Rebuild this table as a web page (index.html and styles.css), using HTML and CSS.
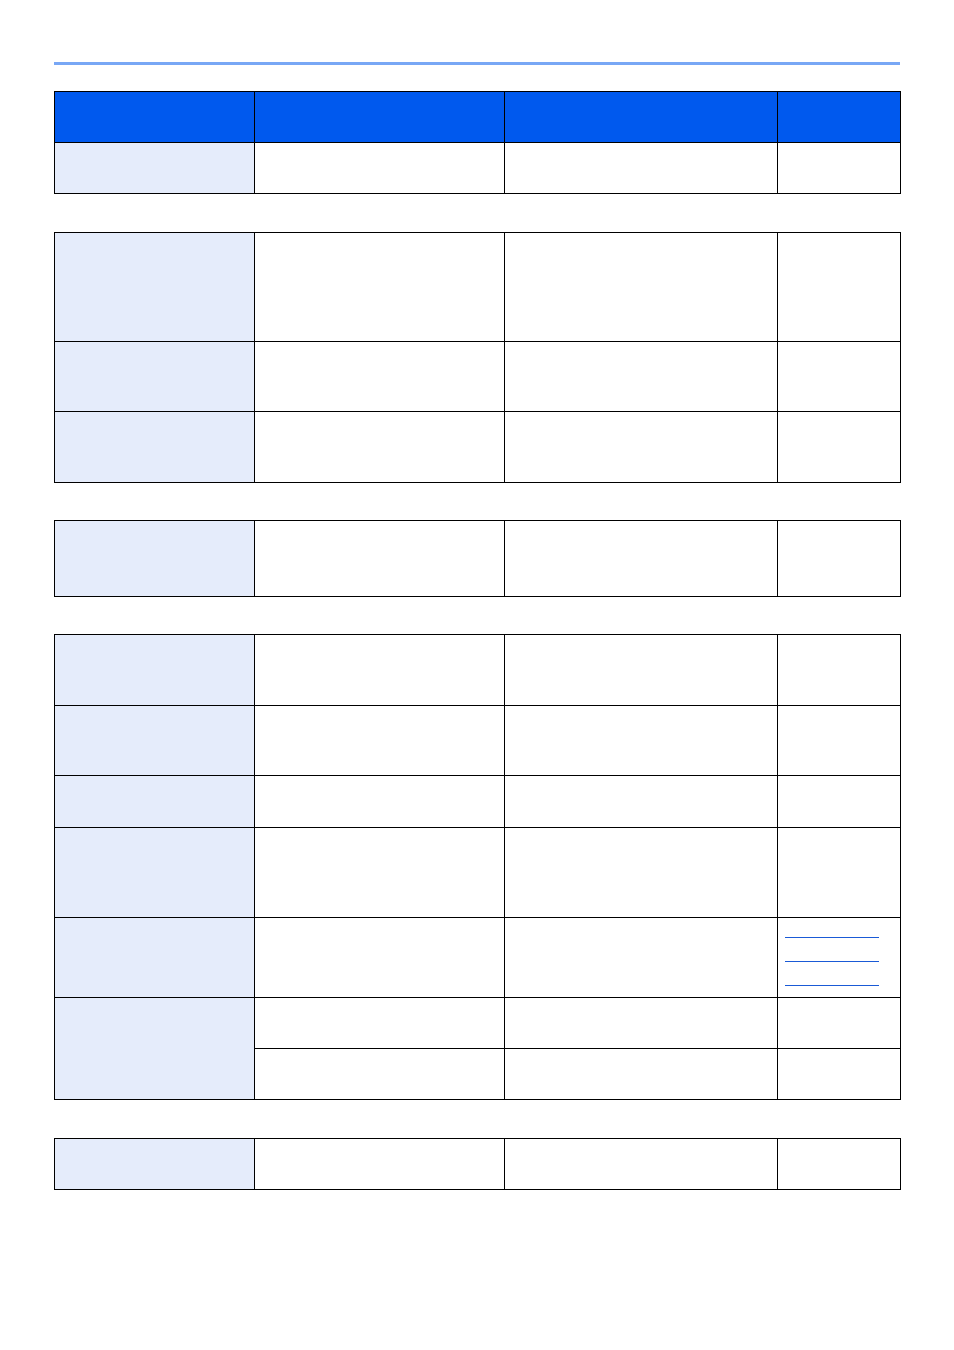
FILE: index.html
```html
<!DOCTYPE html>
<html>
<head>
<meta charset="utf-8">
<link rel="stylesheet" href="styles.css">
</head>
<body>
<div class="page">
  <div class="rule"></div>

  <div class="tbl t1">
    <div class="c head"></div><div class="c head"></div><div class="c head"></div><div class="c head"></div>
    <div class="c lbl"></div><div class="c"></div><div class="c"></div><div class="c"></div>
  </div>

  <div class="tbl t2">
    <div class="c lbl"></div><div class="c"></div><div class="c"></div><div class="c"></div>
    <div class="c lbl"></div><div class="c"></div><div class="c"></div><div class="c"></div>
    <div class="c lbl"></div><div class="c"></div><div class="c"></div><div class="c"></div>
  </div>

  <div class="tbl t3">
    <div class="c lbl"></div><div class="c"></div><div class="c"></div><div class="c"></div>
  </div>

  <div class="tbl t4">
    <div class="c lbl"></div><div class="c"></div><div class="c"></div><div class="c"></div>
    <div class="c lbl"></div><div class="c"></div><div class="c"></div><div class="c"></div>
    <div class="c lbl"></div><div class="c"></div><div class="c"></div><div class="c"></div>
    <div class="c lbl"></div><div class="c"></div><div class="c"></div><div class="c"></div>
    <div class="c lbl"></div><div class="c"></div><div class="c"></div>
    <div class="c links">
      <span class="link"></span><span class="link"></span><span class="link"></span>
    </div>
    <div class="c lbl span2"></div><div class="c"></div><div class="c"></div><div class="c"></div>
    <div class="c"></div><div class="c"></div><div class="c"></div>
  </div>

  <div class="tbl t5">
    <div class="c lbl"></div><div class="c"></div><div class="c"></div><div class="c"></div>
  </div>
</div>
</body>
</html>
```

FILE: styles.css
```css
html, body {
  margin: 0;
  padding: 0;
  background: #ffffff;
  font-family: "Liberation Sans", Arial, sans-serif;
}

.page {
  padding: 62px 0 0 54px;
  width: 847px;
}

.rule {
  height: 3px;
  width: 846px;
  background: #78a7f5;
}

.tbl {
  display: grid;
  grid-template-columns: 199px 249px 272px 122px;
  gap: 1px;
  padding: 1px;
  background: #000000;
  width: 845px;
}

.c {
  background: #ffffff;
}

.c.head {
  background: #0059ee;
}

.c.lbl {
  background: #e5ecfb;
}

.span2 {
  grid-row: span 2;
}

.t1 {
  margin-top: 26px;
  grid-template-rows: 50px 50px;
}

.t2 {
  margin-top: 38px;
  grid-template-rows: 108px 69px 70px;
}

.t3 {
  margin-top: 37px;
  grid-template-rows: 75px;
}

.t4 {
  margin-top: 37px;
  grid-template-rows: 70px 69px 51px 89px 79px 50px 50px;
}

.t5 {
  margin-top: 38px;
  grid-template-rows: 50px;
}

.links {
  display: flex;
  flex-direction: column;
  padding: 19px 0 0 7px;
  gap: 23px;
}

.link {
  display: block;
  width: 94px;
  height: 1px;
  background: #1a5ad6;
}
```
